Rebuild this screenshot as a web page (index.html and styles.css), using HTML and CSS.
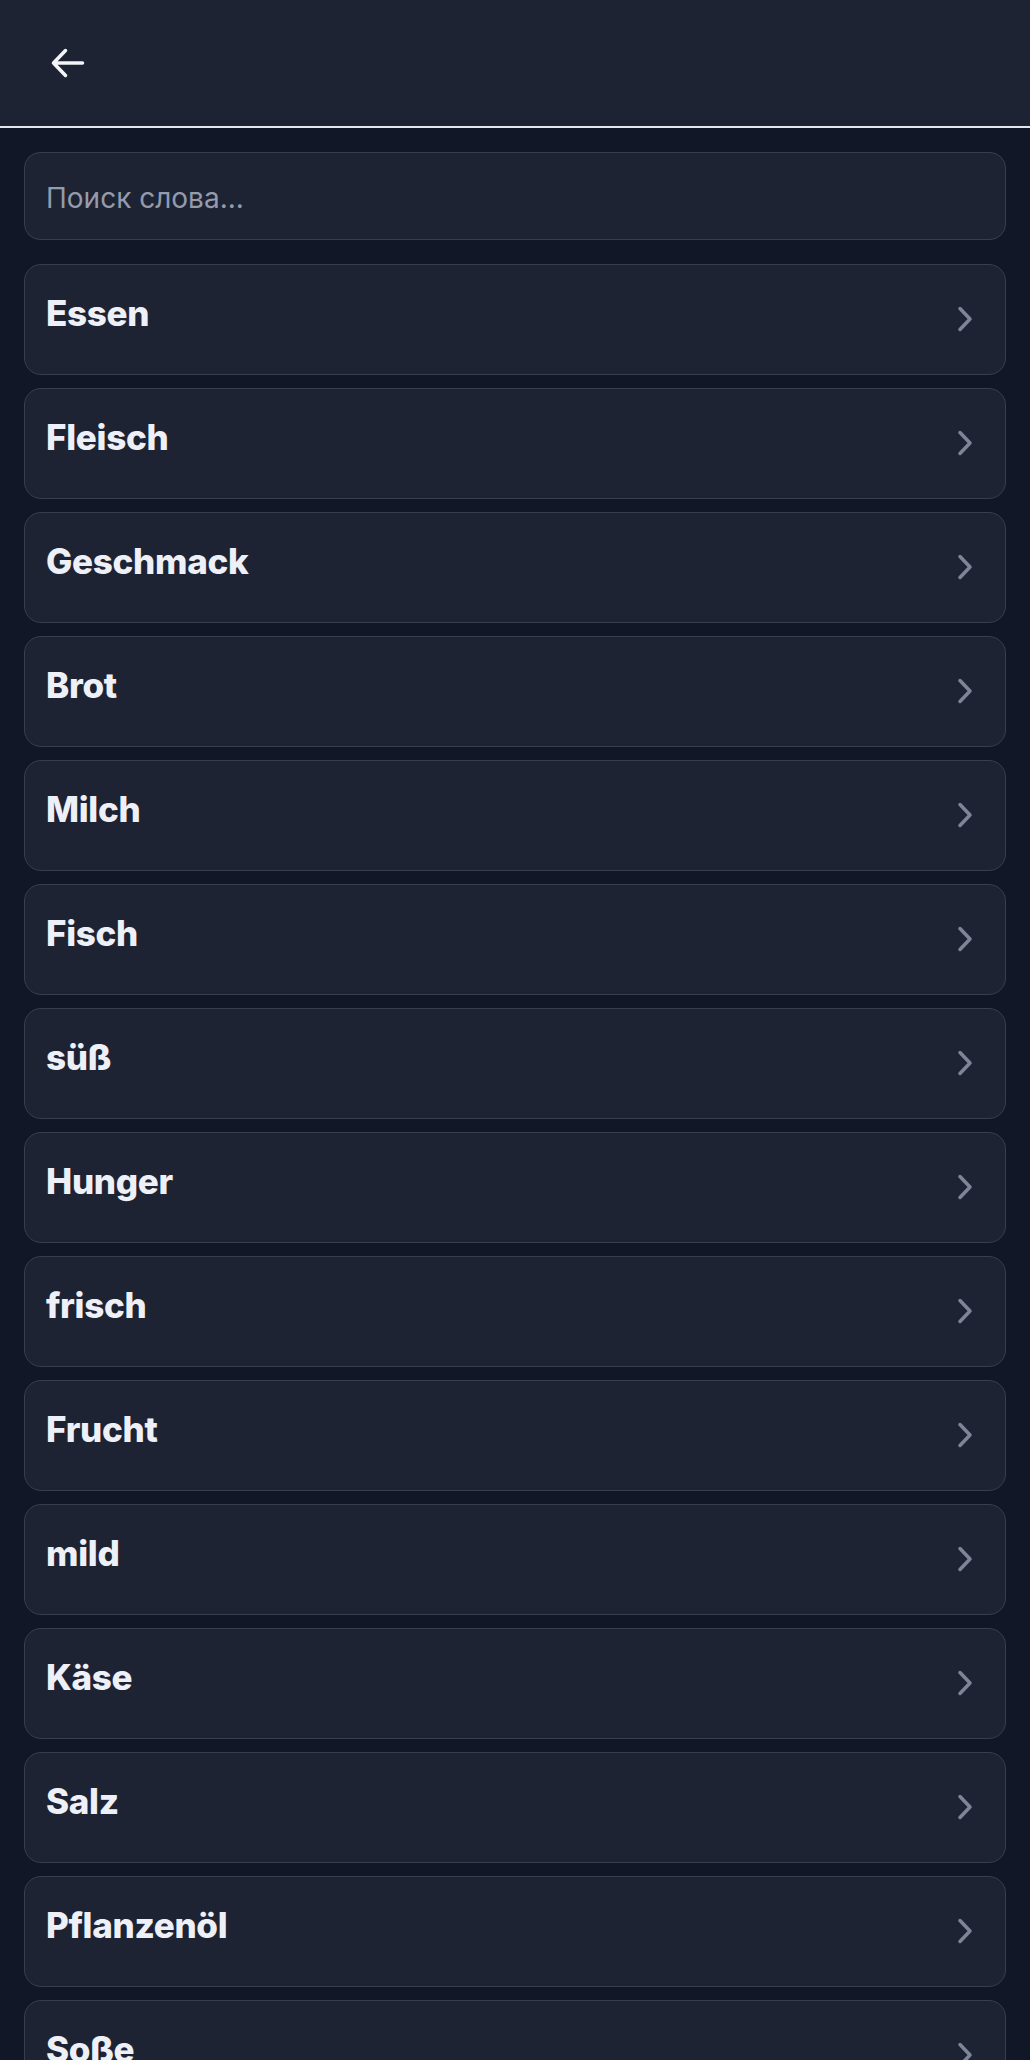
FILE: index.html
```html
<!DOCTYPE html>
<html lang="ru">
<head>
    <meta charset="UTF-8">
    <meta name="viewport" content="width=device-width, initial-scale=1.0">
    <title>Слова</title>
    <link rel="stylesheet" href="styles.css">
</head>
<body>
    <header class="top-bar">
        <button class="back-btn" aria-label="Назад">
            <svg width="36" height="32" viewBox="0 0 36 32" fill="none" stroke="currentColor" stroke-width="3.5" stroke-linecap="round" stroke-linejoin="round">
                <path d="M3.5 16H32.5M15.5 3.5L3.5 16L15.5 28.5"/>
            </svg>
        </button>
    </header>

    <main class="content">
        <input type="text" class="search-input" placeholder="Поиск слова...">

        <ul class="word-list">
            <li class="word-card"><span class="word">Essen</span><svg class="chevron" width="18" height="28" viewBox="0 0 18 28"><path d="M3 3.5L13 14L3 24.5"/></svg></li>
            <li class="word-card"><span class="word">Fleisch</span><svg class="chevron" width="18" height="28" viewBox="0 0 18 28"><path d="M3 3.5L13 14L3 24.5"/></svg></li>
            <li class="word-card"><span class="word">Geschmack</span><svg class="chevron" width="18" height="28" viewBox="0 0 18 28"><path d="M3 3.5L13 14L3 24.5"/></svg></li>
            <li class="word-card"><span class="word">Brot</span><svg class="chevron" width="18" height="28" viewBox="0 0 18 28"><path d="M3 3.5L13 14L3 24.5"/></svg></li>
            <li class="word-card"><span class="word">Milch</span><svg class="chevron" width="18" height="28" viewBox="0 0 18 28"><path d="M3 3.5L13 14L3 24.5"/></svg></li>
            <li class="word-card"><span class="word">Fisch</span><svg class="chevron" width="18" height="28" viewBox="0 0 18 28"><path d="M3 3.5L13 14L3 24.5"/></svg></li>
            <li class="word-card"><span class="word">süß</span><svg class="chevron" width="18" height="28" viewBox="0 0 18 28"><path d="M3 3.5L13 14L3 24.5"/></svg></li>
            <li class="word-card"><span class="word">Hunger</span><svg class="chevron" width="18" height="28" viewBox="0 0 18 28"><path d="M3 3.5L13 14L3 24.5"/></svg></li>
            <li class="word-card"><span class="word">frisch</span><svg class="chevron" width="18" height="28" viewBox="0 0 18 28"><path d="M3 3.5L13 14L3 24.5"/></svg></li>
            <li class="word-card"><span class="word">Frucht</span><svg class="chevron" width="18" height="28" viewBox="0 0 18 28"><path d="M3 3.5L13 14L3 24.5"/></svg></li>
            <li class="word-card"><span class="word">mild</span><svg class="chevron" width="18" height="28" viewBox="0 0 18 28"><path d="M3 3.5L13 14L3 24.5"/></svg></li>
            <li class="word-card"><span class="word">Käse</span><svg class="chevron" width="18" height="28" viewBox="0 0 18 28"><path d="M3 3.5L13 14L3 24.5"/></svg></li>
            <li class="word-card"><span class="word">Salz</span><svg class="chevron" width="18" height="28" viewBox="0 0 18 28"><path d="M3 3.5L13 14L3 24.5"/></svg></li>
            <li class="word-card"><span class="word">Pflanzenöl</span><svg class="chevron" width="18" height="28" viewBox="0 0 18 28"><path d="M3 3.5L13 14L3 24.5"/></svg></li>
            <li class="word-card"><span class="word">Soße</span><svg class="chevron" width="18" height="28" viewBox="0 0 18 28"><path d="M3 3.5L13 14L3 24.5"/></svg></li>
        </ul>
    </main>
</body>
</html>
```

FILE: styles.css
```css
body {
    margin: 0;
    background-color: #111726;
    font-family: Inter, 'Noto Sans', sans-serif;
    color: #eef0f7;
}

.top-bar {
    height: 126px;
    display: flex;
    align-items: center;
    padding-left: 50px;
    background-color: #1e2333;
    border-bottom: 2px solid #e5e7eb;
}

.back-btn {
    display: flex;
    padding: 0;
    border: none;
    background: none;
    color: #f4f5f8;
    cursor: pointer;
}

.content {
    padding: 24px 24px;
}

.search-input {
    display: block;
    box-sizing: border-box;
    width: 100%;
    height: 88px;
    padding: 4px 21px 0;
    font-family: Inter, 'Noto Sans', sans-serif;
    font-size: 28px;
    color: #eef0f7;
    background-color: #1e2333;
    border: 1px solid #373e4e;
    border-radius: 16px;
    outline: none;
}

.search-input::placeholder {
    color: #949bab;
}

.word-list {
    list-style: none;
    margin: 24px 0 0;
    padding: 0;
    display: flex;
    flex-direction: column;
    gap: 13px;
}

.word-card {
    box-sizing: border-box;
    height: 111px;
    display: flex;
    justify-content: space-between;
    align-items: flex-start;
    padding: 27px 30px 0 21px;
    background-color: #1e2333;
    border: 1px solid #373e4e;
    border-radius: 17px;
    cursor: pointer;
}

.word {
    font-size: 35px;
    font-weight: 800;
    letter-spacing: -0.3px;
}

.chevron {
    align-self: center;
    margin-top: -28px;
    fill: none;
    stroke: #7d8598;
    stroke-width: 3.5;
    stroke-linecap: round;
    stroke-linejoin: round;
}
```
